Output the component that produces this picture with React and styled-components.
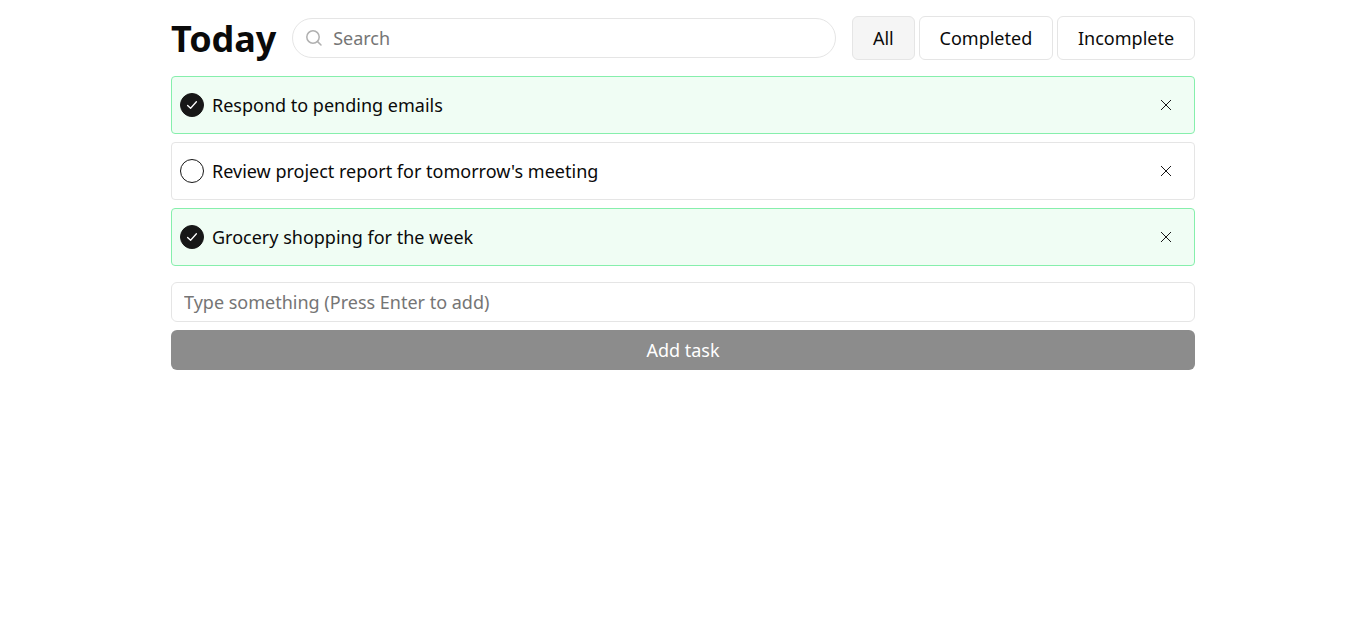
import { useState } from "react";
import styled, { createGlobalStyle } from "styled-components";

const GlobalStyle = createGlobalStyle`
  * {
    box-sizing: border-box;
  }
  body {
    margin: 0;
    background: #fff;
    color: #0a0a0a;
    font-family: "Noto Sans", sans-serif;
  }
`;

const Container = styled.div`
  width: 1024px;
  margin: 0 auto;
  padding-top: 16px;
`;

const Header = styled.div`
  display: flex;
  align-items: center;
  gap: 16px;
  height: 44px;
  margin-bottom: 16px;
`;

const Title = styled.h1`
  margin: 0;
  padding-top: 2px;
  font-size: 36px;
  line-height: 44px;
  font-weight: 700;
  letter-spacing: -0.1px;
`;

const SearchBox = styled.label`
  flex: 1;
  height: 40px;
  display: flex;
  align-items: center;
  gap: 8px;
  padding: 0 12px;
  border: 1px solid #e5e5e5;
  border-radius: 20px;
  color: #b0b0b0;
`;

const SearchInput = styled.input`
  flex: 1;
  min-width: 0;
  border: none;
  outline: none;
  background: transparent;
  font: inherit;
  font-size: 18px;
  color: #0a0a0a;

  &::placeholder {
    color: #757575;
    opacity: 1;
  }
`;

const Filters = styled.div`
  display: flex;
  gap: 4px;
`;

const FilterButton = styled.button`
  height: 44px;
  padding: 0 19.9px;
  border: 1px solid #e5e5e5;
  border-radius: 6px;
  background: ${(props) => (props.$active ? "#f5f5f5" : "#fff")};
  color: #0a0a0a;
  font: inherit;
  font-size: 18px;
  cursor: pointer;
`;

const TaskList = styled.div`
  display: flex;
  flex-direction: column;
  gap: 8px;
  margin-bottom: 16px;
`;

const TaskRow = styled.div`
  height: 58px;
  display: flex;
  align-items: center;
  gap: 8px;
  padding: 0 8px;
  border: 1px solid ${(props) => (props.$done ? "#86efac" : "#e5e5e5")};
  border-radius: 4px;
  background: ${(props) => (props.$done ? "#f0fdf4" : "#fff")};
`;

const Check = styled.button`
  width: 24px;
  height: 24px;
  flex: none;
  display: flex;
  align-items: center;
  justify-content: center;
  padding: 0;
  border: 1px solid #171717;
  border-radius: 50%;
  background: ${(props) => (props.$done ? "#171717" : "#fff")};
  color: #fff;
  cursor: pointer;
`;

const TaskText = styled.span`
  flex: 1;
  font-size: 18px;
  line-height: 28px;
`;

const CloseButton = styled.button`
  width: 40px;
  height: 40px;
  flex: none;
  display: flex;
  align-items: center;
  justify-content: center;
  padding: 0;
  border: none;
  background: transparent;
  color: #171717;
  cursor: pointer;
`;

const AddInput = styled.input`
  display: block;
  width: 100%;
  height: 40px;
  padding: 0 12px;
  margin-bottom: 8px;
  border: 1px solid #e5e5e5;
  border-radius: 6px;
  outline: none;
  font: inherit;
  font-size: 18px;

  &::placeholder {
    color: #757575;
    opacity: 1;
  }
`;

const AddButton = styled.button`
  display: block;
  width: 100%;
  height: 40px;
  border: none;
  border-radius: 6px;
  background: #8c8c8c;
  color: #fff;
  font: inherit;
  font-size: 18px;
`;

const SearchIcon = () => (
  <svg width="18" height="18" viewBox="0 0 18 18" fill="none" stroke="currentColor" strokeWidth="1.5" strokeLinecap="round">
    <circle cx="8" cy="8" r="6.2" />
    <path d="M12.6 12.6L16 16" />
  </svg>
);

const CheckIcon = () => (
  <svg width="12" height="12" viewBox="0 0 12 12" fill="none" stroke="currentColor" strokeWidth="1.3" strokeLinecap="round" strokeLinejoin="round">
    <path d="M1.6 6.4L4.6 9.2L10.4 2.8" />
  </svg>
);

const CloseIcon = () => (
  <svg width="12" height="12" viewBox="0 0 12 12" fill="none" stroke="currentColor" strokeWidth="1">
    <path d="M1 1L11 11M11 1L1 11" />
  </svg>
);

const tasks = [
  { id: 1, text: "Respond to pending emails", done: true },
  { id: 2, text: "Review project report for tomorrow's meeting", done: false },
  { id: 3, text: "Grocery shopping for the week", done: true },
];

const App = () => {
  const [filter, setFilter] = useState("All");

  return (
    <Container>
      <GlobalStyle />
      <Header>
        <Title>Today</Title>
        <SearchBox>
          <SearchIcon />
          <SearchInput placeholder="Search" />
        </SearchBox>
        <Filters>
          {["All", "Completed", "Incomplete"].map((name) => (
            <FilterButton key={name} $active={filter === name} onClick={() => setFilter(name)}>
              {name}
            </FilterButton>
          ))}
        </Filters>
      </Header>
      <TaskList>
        {tasks.map((task) => (
          <TaskRow key={task.id} $done={task.done}>
            <Check $done={task.done}>{task.done && <CheckIcon />}</Check>
            <TaskText>{task.text}</TaskText>
            <CloseButton>
              <CloseIcon />
            </CloseButton>
          </TaskRow>
        ))}
      </TaskList>
      <AddInput placeholder="Type something (Press Enter to add)" />
      <AddButton>Add task</AddButton>
    </Container>
  );
};

export default App;
